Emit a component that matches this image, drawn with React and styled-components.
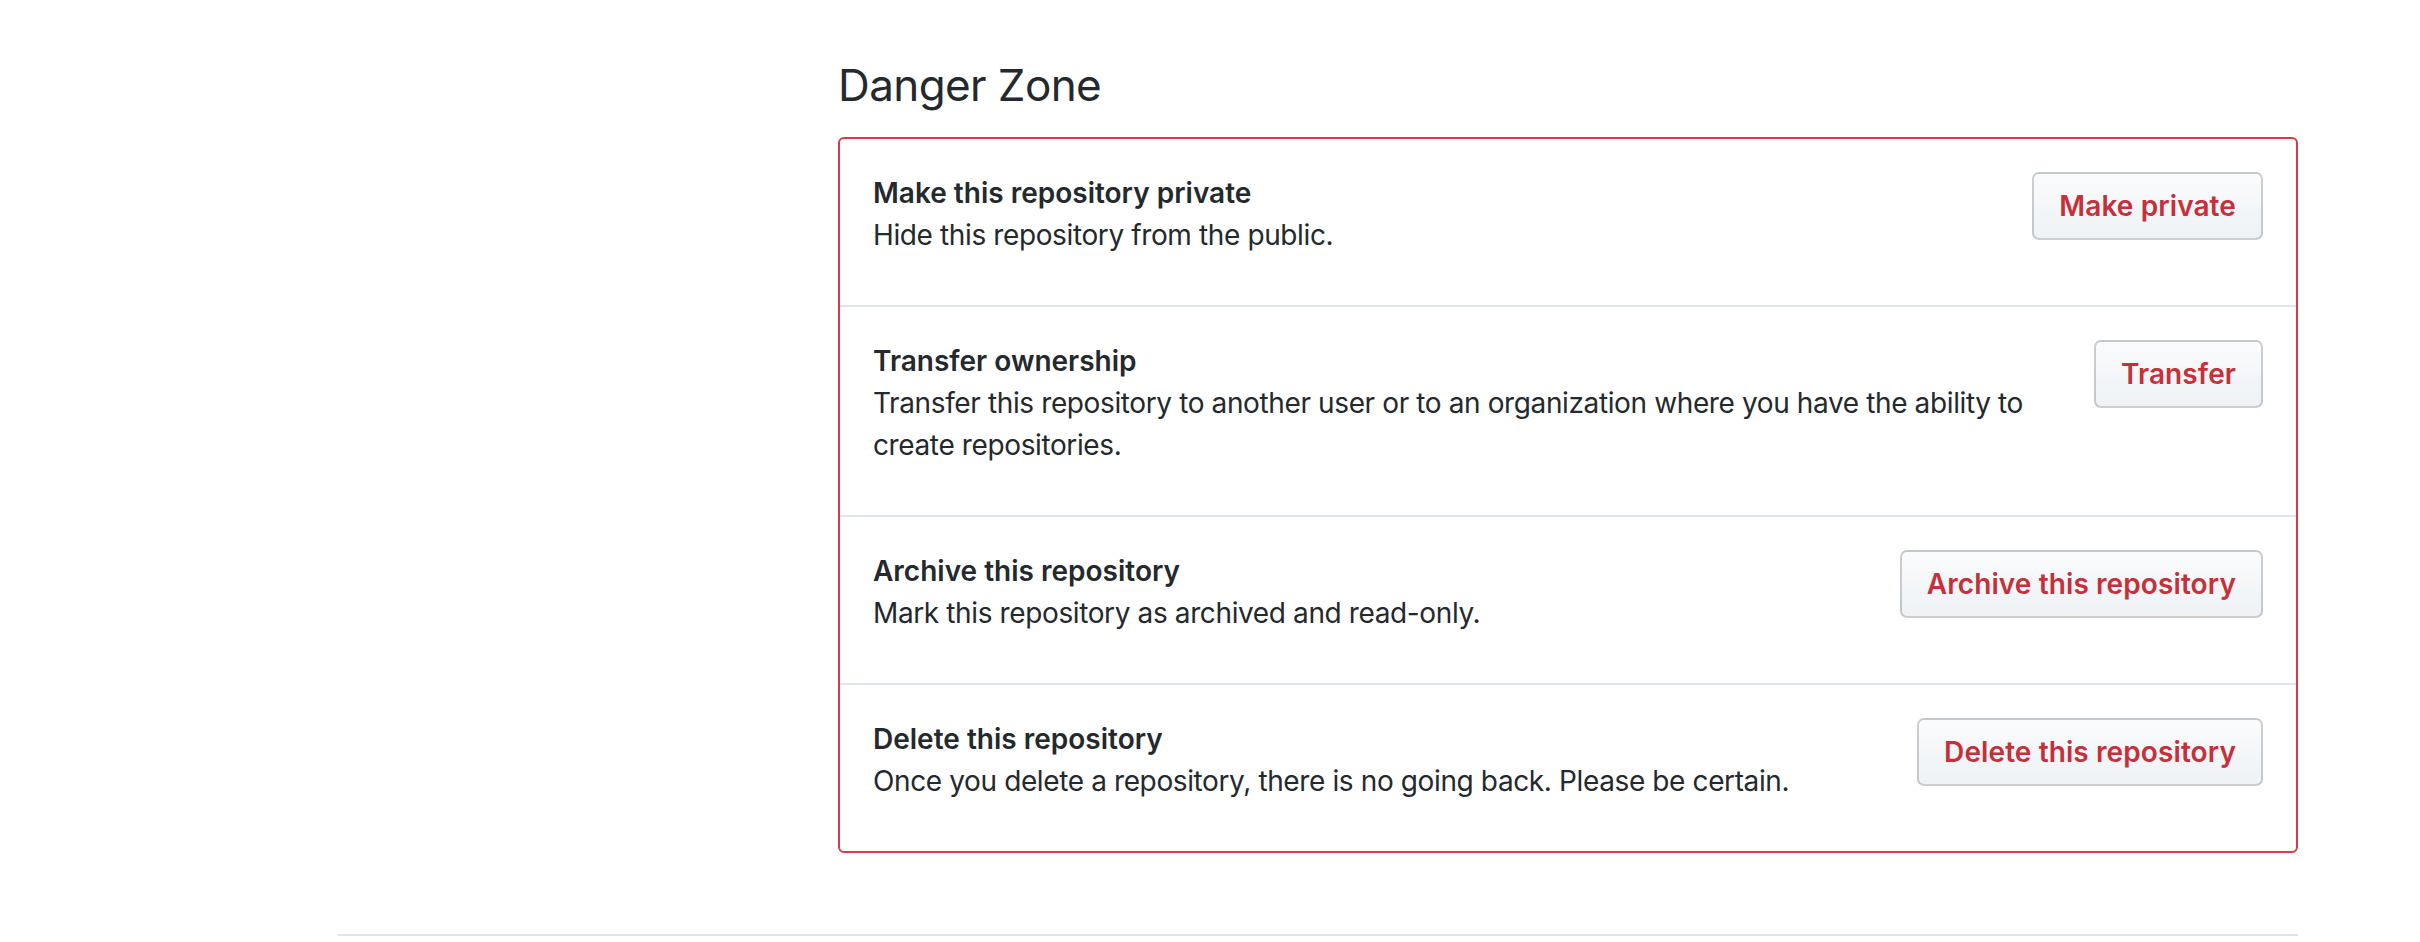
import styled, { createGlobalStyle } from "styled-components"

const GlobalStyle = createGlobalStyle`
    body {
        margin: 0;
        background: #ffffff;
        font-family: Inter, "Noto Sans", "Liberation Sans", sans-serif;
        color: #24292e;
    }
`

const Page = styled.div`
    width: 1960px;
    margin-left: 338px;
    padding-top: 55px;
`

const Layout = styled.div`
    display: flex;
`

const Sidebar = styled.aside`
    width: 500px;
    flex-shrink: 0;
`

const Main = styled.main`
    flex: 1;
    margin-bottom: 81px;
`

const Titulo = styled.h2`
    margin: 0 0 22px 0;
    font-size: 44px;
    line-height: 60px;
    font-weight: 400;
    letter-spacing: -0.6px;
    color: #24292e;
`

const Caja = styled.div`
    border: 2px solid #d73a49;
    border-radius: 6px;
`

const Fila = styled.div`
    display: flex;
    justify-content: space-between;
    align-items: flex-start;
    gap: 40px;
    padding: 33px 33px;
    border-top: ${props => props.primera ? "none" : "2px solid #e1e4e8"};
`

const Texto = styled.div`
    flex: 1;
    font-size: 28px;
    line-height: 42px;
`

const Nombre = styled.strong`
    display: block;
    font-weight: 600;
`

const Descripcion = styled.p`
    margin: 0 0 16px 0;
    letter-spacing: -0.38px;
`

const Boton = styled.button`
    flex-shrink: 0;
    font-family: inherit;
    font-size: 28px;
    line-height: 40px;
    font-weight: 600;
    letter-spacing: 0.1px;
    color: #c5303a;
    padding: 12px 25px;
    border: 2px solid rgba(27, 31, 35, 0.2);
    border-radius: 7px;
    background: linear-gradient(-180deg, #fafbfc 0%, #eff3f6 90%);
    cursor: pointer;
    white-space: nowrap;
`

const Pie = styled.footer`
    border-top: 2px solid #e1e4e8;
    height: 6px;
`

const opciones = [
    {
        titulo: "Make this repository private",
        texto: "Hide this repository from the public.",
        boton: "Make private",
    },
    {
        titulo: "Transfer ownership",
        texto: "Transfer this repository to another user or to an organization where you have the ability to create repositories.",
        boton: "Transfer",
    },
    {
        titulo: "Archive this repository",
        texto: "Mark this repository as archived and read-only.",
        boton: "Archive this repository",
    },
    {
        titulo: "Delete this repository",
        texto: "Once you delete a repository, there is no going back. Please be certain.",
        boton: "Delete this repository",
    },
]

const App = () => {
    return (
        <>
            <GlobalStyle />
            <Page>
                <Layout>
                    <Sidebar />
                    <Main>
                        <Titulo>Danger Zone</Titulo>
                        <Caja>
                            {opciones.map((op, i) => (
                                <Fila key={op.titulo} primera={i === 0}>
                                    <Texto>
                                        <Nombre>{op.titulo}</Nombre>
                                        <Descripcion>{op.texto}</Descripcion>
                                    </Texto>
                                    <Boton>{op.boton}</Boton>
                                </Fila>
                            ))}
                        </Caja>
                    </Main>
                </Layout>
                <Pie />
            </Page>
        </>
    )
}

export default App
